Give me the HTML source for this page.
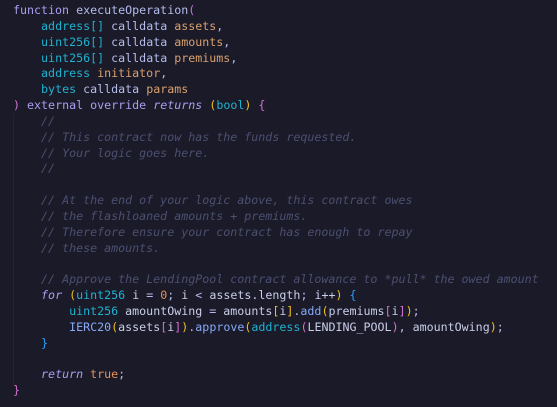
<!DOCTYPE html>
<html><head><style>
html,body{margin:0;padding:0;background:#1b1a29;width:557px;height:407px;overflow:hidden}
pre{margin:0;position:absolute;left:13px;top:3px;font-family:"DejaVu Sans Mono","Liberation Mono",monospace;font-size:11.65px;line-height:15.85px;color:#b4bcea}
.k{color:#a99ef0}.t{color:#1fb2cf}.p{color:#d9a06e}.c{color:#4b5070;font-style:italic}
.i{font-style:italic;color:#a99ef0}.f{color:#86a9f5}.n{color:#e8925a}
.y{color:#f0c020}.m{color:#d070d0}.b{color:#2a9df4}.x{color:#c8cde8}
.g{position:absolute;left:13px;top:114px;width:1px;height:270px;background:#232236}
</style></head><body>
<div class="g"></div>
<pre><span class="k">function</span> executeOperation<span class="m">(</span>
    <span class="t">address</span><span class="t">[]</span> calldata <span class="p">assets</span>,
    <span class="t">uint256</span><span class="t">[]</span> calldata <span class="p">amounts</span>,
    <span class="t">uint256</span><span class="t">[]</span> calldata <span class="p">premiums</span>,
    <span class="t">address</span> <span class="p">initiator</span>,
    <span class="t">bytes</span> calldata <span class="p">params</span>
<span class="m">)</span> <span class="k">external</span> <span class="k">override</span> <span class="i">returns</span> <span class="y">(</span><span class="t">bool</span><span class="y">)</span> <span class="m">{</span>
    <span class="c">//</span>
    <span class="c">// This contract now has the funds requested.</span>
    <span class="c">// Your logic goes here.</span>
    <span class="c">//</span>

    <span class="c">// At the end of your logic above, this contract owes</span>
    <span class="c">// the flashloaned amounts + premiums.</span>
    <span class="c">// Therefore ensure your contract has enough to repay</span>
    <span class="c">// these amounts.</span>

    <span class="c">// Approve the LendingPool contract allowance to *pull* the owed amount</span>
    <span class="i">for</span> <span class="y">(</span><span class="t">uint256</span> <span class="x">i</span> = <span class="n">0</span>; <span class="x">i</span> &lt; <span class="x">assets.length</span>; <span class="x">i++</span><span class="y">)</span> <span class="b">{</span>
        <span class="t">uint256</span> <span class="x">amountOwing</span> = <span class="x">amounts</span><span class="y">[</span><span class="x">i</span><span class="y">]</span>.<span class="f">add</span><span class="y">(</span><span class="x">premiums</span><span class="m">[</span><span class="x">i</span><span class="m">]</span><span class="y">)</span>;
        <span class="f">IERC20</span><span class="y">(</span><span class="x">assets</span><span class="m">[</span><span class="x">i</span><span class="m">]</span><span class="y">)</span>.<span class="f">approve</span><span class="y">(</span><span class="t">address</span><span class="m">(</span><span class="x">LENDING_POOL</span><span class="m">)</span>, <span class="x">amountOwing</span><span class="y">)</span>;
    <span class="b">}</span>

    <span class="i">return</span> <span class="n">true</span>;
<span class="m">}</span></pre>
</body></html>
